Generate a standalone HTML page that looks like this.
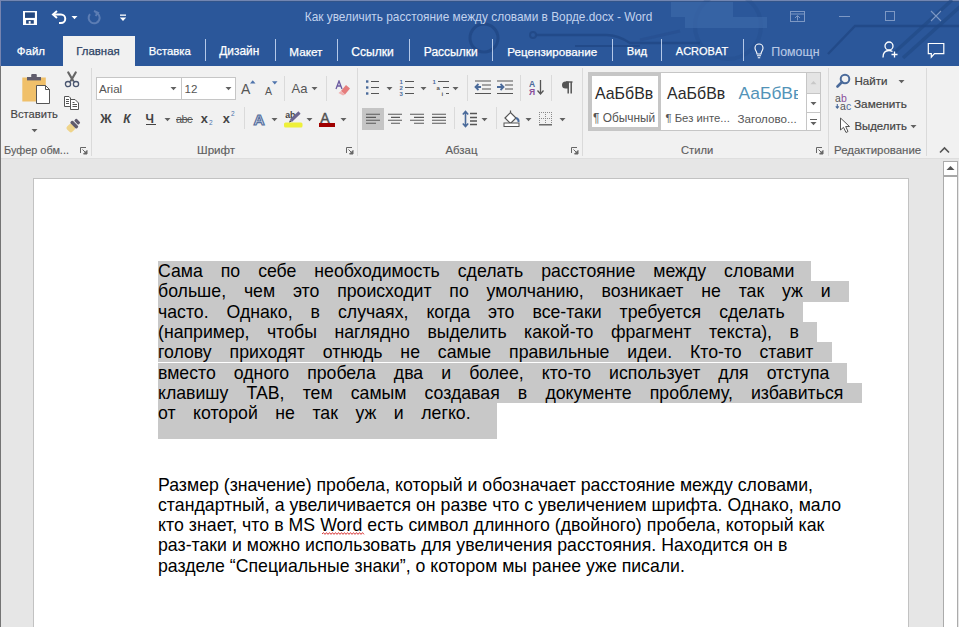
<!DOCTYPE html>
<html><head><meta charset="utf-8">
<style>
*{box-sizing:border-box}
html,body{margin:0;padding:0}
body{width:959px;height:627px;overflow:hidden;position:relative;background:#e6e6e6;font-family:"Liberation Sans",sans-serif}
.a{position:absolute}
#top{left:0;top:0;width:959px;height:66px;background:#2b579a;overflow:hidden}
#ribbon{left:0;top:66px;width:959px;height:93px;background:#f1f1f1;border-bottom:1px solid #dedede}
#page{left:33px;top:178px;width:876px;height:460px;background:#fff;border:1px solid #c2c2c2}
#sb{left:943px;top:161px;width:15px;height:470px;background:#fff;border:1px solid #ababab}
.ln{position:absolute;left:158px;font-size:17.7px;line-height:20.3px;height:20.3px;white-space:pre;color:#000}
.hl{position:absolute;background:#c8c8c8}
.tab{position:absolute;top:45.5px;line-height:1;font-size:12px;color:#fff;white-space:pre;-webkit-text-stroke:0.25px currentColor}
.t1{line-height:1;white-space:pre}
.sep{position:absolute;width:1px;background:#b4c8e8}
.gl{position:absolute;color:#5e5e5e;-webkit-text-stroke:0.15px #5e5e5e}
.lbl{line-height:1;white-space:pre}
.rsep{position:absolute;width:1px;background:#dadada}
</style></head><body>
<div class="a" id="top">
  <div class="a" style="left:0;top:0;width:959px;height:1px;background:#7286b2"></div>
  <div class="a" style="left:0;top:1px;width:959px;height:1px;background:#33558a"></div>
  <svg class="a" style="left:0;top:0" width="959" height="66" viewBox="0 0 959 66">
   <g fill="none" stroke="#204784" stroke-opacity="0.8">
    <circle cx="484" cy="38" r="14" stroke-width="3"/>
    <circle cx="533" cy="35" r="3" stroke-width="2"/>
    <path d="M536 35 H606 Q618 35 630 43 H700" stroke-width="2.5"/>
    <path d="M575 46 H640" stroke-width="2"/>
    <circle cx="728" cy="26" r="33" stroke-width="4" stroke-opacity="0.2"/>
    <path d="M640 40 L680 31" stroke-width="3" stroke-opacity="0.3"/>
    <path d="M828 54 L855 26 H959" stroke-width="2.5"/>
    <path d="M895 52 L952 0" stroke-width="3.5" stroke-opacity="0.6"/>
    <path d="M903 58 L962 5" stroke-width="3.5" stroke-opacity="0.6"/>
   </g>
   <rect x="671" y="2" width="62" height="15" fill="#3d6aab" fill-opacity="0.6"/>
   <rect x="685" y="17" width="82" height="11" fill="#3d6aab" fill-opacity="0.6"/>
  </svg>
  <div class="a t1" style="left:304.8px;top:11.8px;font-size:11.85px;color:#c2d3ee">Как увеличить расстояние между словами в Ворде.docx - Word</div>
  <div class="tab" style="left:63px;top:36px;width:72px;height:30px;background:#f1f1f1"></div>
  <div class="tab" style="left:16.8px;font-size:11.5px">Файл</div>
  <div class="tab" style="left:76.3px;font-size:11.4px;color:#2b3f63">Главная</div>
  <div class="tab" style="left:148.8px;font-size:11.3px">Вставка</div>
  <div class="sep" style="left:205px;top:39px;height:22px"></div>
  <div class="tab" style="left:219.3px;font-size:11.9px">Дизайн</div>
  <div class="sep" style="left:275px;top:39px;height:22px"></div>
  <div class="tab" style="left:289.3px;font-size:11.7px">Макет</div>
  <div class="sep" style="left:337px;top:39px;height:22px"></div>
  <div class="tab" style="left:351.3px;font-size:12.1px">Ссылки</div>
  <div class="sep" style="left:409px;top:39px;height:22px"></div>
  <div class="tab" style="left:423.8px;font-size:12px">Рассылки</div>
  <div class="sep" style="left:492px;top:39px;height:22px"></div>
  <div class="tab" style="left:507.3px;font-size:11.65px">Рецензирование</div>
  <div class="sep" style="left:612px;top:39px;height:22px"></div>
  <div class="tab" style="left:626.8px;font-size:11.2px">Вид</div>
  <div class="sep" style="left:661px;top:39px;height:22px"></div>
  <div class="tab" style="left:675.8px;font-size:11px">ACROBAT</div>
  <div class="sep" style="left:743px;top:39px;height:22px"></div>
  <div class="tab" style="left:771.3px;font-size:12.4px;color:#b9c9e5;-webkit-text-stroke:0.12px #b9c9e5">Помощн</div>
</div>
<div class="a" style="left:0;top:0;width:1px;height:66px;background:#7684b0;z-index:5"></div>
<div class="a" style="left:0;top:66px;width:1px;height:561px;background:#747474;z-index:5"></div>
<div class="a" id="ribbon"></div>
<!-- QAT -->
<svg class="a" style="left:22.9px;top:10.7px" width="14" height="14" viewBox="0 0 14 14">
 <rect x="0" y="0" width="14" height="14" fill="#fff"/>
 <rect x="2" y="1.4" width="9.9" height="5.5" fill="#24487f"/>
 <rect x="3.1" y="9.1" width="7.7" height="3.6" fill="#24487f"/>
 <rect x="5.7" y="10.1" width="1.9" height="2.6" fill="#fff"/>
</svg>
<svg class="a" style="left:51px;top:10px" width="17" height="15" viewBox="0 0 17 15">
 <path d="M2.5 4.5 H10 A4.2 4.2 0 0 1 10 13 H8" fill="none" stroke="#fff" stroke-width="2"/>
 <path d="M6 1 L2 4.5 L6 8" fill="none" stroke="#fff" stroke-width="2"/>
</svg>
<svg class="a" style="left:71px;top:15px" width="7" height="5" viewBox="0 0 7 5"><path d="M0.5 1 H6.5 L3.5 4.2Z" fill="#fff"/></svg>
<svg class="a" style="left:86px;top:10px" width="16" height="15" viewBox="0 0 16 15">
 <path d="M9.5 2.5 A5.5 5.5 0 1 1 4 4.2" fill="none" stroke="#5c7db4" stroke-width="2"/>
 <path d="M8 1 L12 2.8 L9.6 6" fill="none" stroke="#5c7db4" stroke-width="2"/>
</svg>
<svg class="a" style="left:119px;top:14px" width="8" height="8" viewBox="0 0 8 8"><rect x="1" y="0.5" width="6" height="1.3" fill="#fff"/><path d="M0.8 3.5 H7.2 L4 7Z" fill="#fff"/></svg>

<!-- Clipboard group -->
<svg class="a" style="left:22px;top:73px" width="29" height="32" viewBox="0 0 29 32">
 <rect x="0.3" y="4.5" width="23.5" height="24" fill="#f0c06a"/>
 <rect x="5" y="4" width="14" height="3.4" fill="#605c6c"/>
 <rect x="9.2" y="1" width="5.6" height="3.4" rx="1" fill="#605c6c"/>
 <path d="M14.5 12.5 H23.5 L27.5 16.5 V30.5 H14.5 Z" fill="#fff" stroke="#555" stroke-width="1"/>
 <path d="M23.5 12.5 V16.5 H27.5" fill="none" stroke="#555" stroke-width="1"/>
</svg>
<div class="a lbl" style="left:10.5px;top:108.8px;font-size:11.2px;color:#444;-webkit-text-stroke:0.15px #444">Вставить</div>
<svg class="a" style="left:31px;top:128px" width="7" height="5" viewBox="0 0 7 5"><path d="M0.5 1 H6.5 L3.5 4.2Z" fill="#616161"/></svg>
<svg class="a" style="left:64px;top:71px" width="16" height="17" viewBox="0 0 16 17">
 <path d="M4.3 1.5 L8.8 9.3 M11.7 1.5 L7.2 9.3" stroke="#666" stroke-width="2.2" stroke-linecap="round"/>
 <path d="M6.8 9.5 L5.3 11 M9.2 9.5 L10.7 11" stroke="#4a5670" stroke-width="1.2"/>
 <circle cx="4" cy="13.1" r="2.6" fill="none" stroke="#4a5670" stroke-width="1.3"/>
 <circle cx="12" cy="13.1" r="2.6" fill="none" stroke="#4a5670" stroke-width="1.3"/>
</svg>
<svg class="a" style="left:63px;top:95px" width="17" height="16" viewBox="0 0 17 16">
 <path d="M1.5 1.5 H6 L7.5 3 V11.5 H1.5 Z" fill="#fff" stroke="#555" stroke-width="1"/>
 <path d="M3 4.5 H6 M3 6.5 H6 M3 8.5 H6" stroke="#555" stroke-width="1"/>
 <path d="M7.5 4.5 H12 L15.5 8 V14.5 H7.5 Z" fill="#fff" stroke="#555" stroke-width="1"/>
 <path d="M9.5 7.5 H11.5 M9.5 9.5 H14 M9.5 11.5 H14" stroke="#555" stroke-width="1"/>
</svg>
<svg class="a" style="left:60px;top:112px" width="26" height="24" viewBox="0 0 26 24">
 <g transform="translate(6 3.4) rotate(-45 9 8.5)">
  <rect x="-0.5" y="4.8" width="7" height="7.4" rx="2" fill="#efd48a"/>
  <rect x="6.3" y="4" width="3.4" height="9" rx="1.2" fill="#5f5b6c"/>
  <rect x="10.6" y="5.5" width="3.2" height="6" rx="1" fill="#5f5b6c"/>
 </g>
</svg>
<div class="a lbl gl" style="left:4px;top:144.6px;font-size:10.9px">Буфер обм...</div>
<svg class="a launch" style="left:80px;top:147px" width="8" height="8" viewBox="0 0 8 8"><path d="M0.5 6 V0.5 H6" fill="none" stroke="#666" stroke-width="1"/><path d="M2.5 2.5 L6.5 6.5 M7 3.5 V7 H3.5Z" stroke="#666" stroke-width="1" fill="#666"/></svg>
<div class="rsep" style="left:91px;top:68px;height:88px"></div>

<!-- Font group -->
<div class="a" style="left:96px;top:77px;width:86px;height:23px;background:#fff;border:1px solid #c6c6c6"></div>
<div class="a" style="left:181px;top:77px;width:55px;height:23px;background:#fff;border:1px solid #c6c6c6"></div>
<div class="a lbl" style="left:99px;top:83px;font-size:11.6px;color:#555">Arial</div>
<div class="a lbl" style="left:184.5px;top:83px;font-size:11.6px;color:#555">12</div>
<svg class="a" style="left:170px;top:86px" width="7" height="5" viewBox="0 0 7 5"><path d="M0.5 1 H6.5 L3.5 4.2Z" fill="#616161"/></svg>
<svg class="a" style="left:225px;top:86px" width="7" height="5" viewBox="0 0 7 5"><path d="M0.5 1 H6.5 L3.5 4.2Z" fill="#616161"/></svg>

<div class="a" id="page"></div>
<div class="a" id="sb"></div>

<!-- Font group rest -->
<div class="a lbl" style="left:241px;top:82px;font-size:14px;color:#555">A</div>
<svg class="a" style="left:250px;top:80px" width="6" height="4" viewBox="0 0 6 4"><path d="M0 3.5 H5.5 L2.75 0.3Z" fill="#4f74ac"/></svg>
<div class="a lbl" style="left:265px;top:85.5px;font-size:10.5px;color:#555">A</div>
<svg class="a" style="left:272px;top:80.5px" width="6" height="4" viewBox="0 0 6 4"><path d="M0 0.3 H5.5 L2.75 3.5Z" fill="#4f74ac"/></svg>
<div class="rsep" style="left:284px;top:76px;height:25px"></div>
<div class="a lbl" style="left:291.5px;top:82.3px;font-size:13px;color:#555">Aa</div>
<svg class="a" style="left:311px;top:86px" width="7" height="5" viewBox="0 0 7 5"><path d="M0.5 1 H6.5 L3.5 4.2Z" fill="#616161"/></svg>
<div class="rsep" style="left:326px;top:76px;height:25px"></div>
<svg class="a" style="left:335px;top:80px" width="16" height="16" viewBox="0 0 16 16">
 <path d="M1 9 L4 1 L7 9 M2.2 6 H5.8" fill="none" stroke="#6b5aa0" stroke-width="1.3"/>
 <path d="M6 11 L11 5 L15 8.5 L10 14.5 Z" fill="#e57c7c"/>
 <path d="M3.5 13 L6 11 L10 14.5 L8 15.5 Z" fill="#f0b0b0"/>
</svg>
<!-- row 2 -->
<div class="a lbl" style="left:100.3px;top:112.6px;font-size:12.6px;font-weight:bold;color:#444">Ж</div>
<div class="a lbl" style="left:123.3px;top:113.2px;font-size:12px;font-weight:bold;font-style:italic;color:#444">К</div>
<div class="a lbl" style="left:145.5px;top:113.2px;font-size:12px;font-weight:bold;color:#444">Ч</div>
<div class="a" style="left:146px;top:124px;width:10px;height:1.2px;background:#444"></div>
<svg class="a" style="left:164px;top:117px" width="7" height="5" viewBox="0 0 7 5"><path d="M0.5 1 H6.5 L3.5 4.2Z" fill="#616161"/></svg>
<div class="a lbl" style="left:176px;top:113.5px;font-size:11px;color:#555;letter-spacing:-0.6px">abc</div>
<div class="a" style="left:176px;top:119px;width:17px;height:1px;background:#555"></div>
<div class="a lbl" style="left:200.8px;top:113.2px;font-size:12.8px;font-weight:bold;color:#444">x</div>
<div class="a lbl" style="left:209px;top:120px;font-size:6.5px;color:#4f74ac">2</div>
<div class="a lbl" style="left:222.8px;top:113.2px;font-size:12.8px;font-weight:bold;color:#444">x</div>
<div class="a lbl" style="left:231px;top:111px;font-size:6.5px;color:#4f74ac">2</div>
<div class="rsep" style="left:244px;top:107px;height:22px"></div>
<svg class="a" style="left:252px;top:110px" width="17" height="17" viewBox="0 0 17 17">
 <text x="1.6" y="14.6" font-family="Liberation Sans" font-weight="bold" font-size="15.5" fill="#dfe7f3" stroke="#58719f" stroke-width="1.2">A</text>
</svg>
<svg class="a" style="left:271px;top:117px" width="7" height="5" viewBox="0 0 7 5"><path d="M0.5 1 H6.5 L3.5 4.2Z" fill="#616161"/></svg>
<svg class="a" style="left:283px;top:110px" width="20" height="18" viewBox="0 0 20 18">
 <rect x="1" y="12.4" width="18.5" height="5" rx="1.5" fill="#eef03a"/>
 <text x="2.2" y="8" font-family="Liberation Sans" font-weight="bold" font-size="8.8" fill="#444">ab</text>
 <path d="M8 10.5 L16.5 2.5" stroke="#6b6690" stroke-width="3.2"/>
 <path d="M6 12.6 L7 10 L8.8 11.6 Z" fill="#444"/>
</svg>
<svg class="a" style="left:306px;top:117px" width="7" height="5" viewBox="0 0 7 5"><path d="M0.5 1 H6.5 L3.5 4.2Z" fill="#616161"/></svg>
<div class="a lbl" style="left:320.3px;top:111.3px;font-size:14px;color:#505050;-webkit-text-stroke:0.4px #505050">A</div>
<div class="a" style="left:319px;top:123px;width:16px;height:3.5px;background:#a00000"></div>
<svg class="a" style="left:340px;top:117px" width="7" height="5" viewBox="0 0 7 5"><path d="M0.5 1 H6.5 L3.5 4.2Z" fill="#616161"/></svg>
<div class="a lbl gl" style="left:197px;top:144.3px;font-size:11.6px">Шрифт</div>
<svg class="a launch" style="left:346px;top:147px" width="8" height="8" viewBox="0 0 8 8"><path d="M0.5 6 V0.5 H6" fill="none" stroke="#666" stroke-width="1"/><path d="M2.5 2.5 L6.5 6.5 M7 3.5 V7 H3.5Z" stroke="#666" stroke-width="1" fill="#666"/></svg>
<div class="rsep" style="left:357px;top:68px;height:88px"></div>

<!-- Paragraph group -->
<svg class="a" style="left:365px;top:79px" width="16" height="17" viewBox="0 0 16 17">
 <rect x="1" y="1.3" width="2.4" height="2.4" fill="#4a6a9a"/><rect x="1" y="7.3" width="2.4" height="2.4" fill="#4a6a9a"/><rect x="1" y="13.3" width="2.4" height="2.4" fill="#4a6a9a"/>
 <path d="M6 2.5 H14 M6 8.5 H14 M6 14.5 H14" stroke="#555" stroke-width="1.2"/>
</svg>
<svg class="a" style="left:386px;top:86px" width="7" height="5" viewBox="0 0 7 5"><path d="M0.5 1 H6.5 L3.5 4.2Z" fill="#616161"/></svg>
<svg class="a" style="left:399px;top:78px" width="16" height="18" viewBox="0 0 16 18">
 <text x="0.5" y="6" font-family="Liberation Sans" font-weight="bold" font-size="6" fill="#4a6a9a">1</text>
 <text x="0.5" y="12" font-family="Liberation Sans" font-weight="bold" font-size="6" fill="#4a6a9a">2</text>
 <text x="0.5" y="18" font-family="Liberation Sans" font-weight="bold" font-size="6" fill="#4a6a9a">3</text>
 <path d="M6 3.5 H15 M6 9.5 H15 M6 15.5 H15" stroke="#555" stroke-width="1.2"/>
</svg>
<svg class="a" style="left:420px;top:86px" width="7" height="5" viewBox="0 0 7 5"><path d="M0.5 1 H6.5 L3.5 4.2Z" fill="#616161"/></svg>
<svg class="a" style="left:432px;top:78px" width="18" height="18" viewBox="0 0 18 18">
 <text x="0.5" y="6" font-family="Liberation Sans" font-weight="bold" font-size="6" fill="#4a6a9a">1</text>
 <text x="4.5" y="12" font-family="Liberation Sans" font-weight="bold" font-size="6" fill="#555">a</text>
 <text x="9.5" y="18" font-family="Liberation Sans" font-weight="bold" font-size="6" fill="#555">i</text>
 <path d="M6 3.5 H17 M11 9.5 H17 M14 15.5 H17" stroke="#555" stroke-width="1.2"/>
</svg>
<svg class="a" style="left:452px;top:86px" width="7" height="5" viewBox="0 0 7 5"><path d="M0.5 1 H6.5 L3.5 4.2Z" fill="#616161"/></svg>
<div class="rsep" style="left:467px;top:75px;height:26px"></div>
<svg class="a" style="left:474px;top:80px" width="18" height="15" viewBox="0 0 18 15">
 <path d="M1 1 H17 M8 5 H17 M8 9 H17 M1 13.5 H17" stroke="#555" stroke-width="1.2"/>
 <path d="M1.5 7 H7 M4.5 4 L1.5 7 L4.5 10" fill="none" stroke="#4a6a9a" stroke-width="1.8"/>
</svg>
<svg class="a" style="left:496px;top:80px" width="18" height="15" viewBox="0 0 18 15">
 <path d="M1 1 H17 M9 5 H17 M9 9 H17 M1 13.5 H17" stroke="#555" stroke-width="1.2"/>
 <path d="M1 7 H7.5 M4.5 4 L7.5 7 L4.5 10" fill="none" stroke="#4a6a9a" stroke-width="1.8"/>
</svg>
<div class="rsep" style="left:520px;top:75px;height:26px"></div>
<svg class="a" style="left:529px;top:79px" width="16" height="17" viewBox="0 0 16 17">
 <text x="0" y="8" font-family="Liberation Sans" font-weight="bold" font-size="8.5" fill="#4a6a9a">А</text>
 <text x="0" y="16" font-family="Liberation Sans" font-weight="bold" font-size="8.5" fill="#8a4f9a">Я</text>
 <path d="M11.5 1 V15 M8.5 11.5 L11.5 15 L14.5 11.5" fill="none" stroke="#555" stroke-width="1.3"/>
</svg>
<div class="rsep" style="left:551px;top:75px;height:26px"></div>
<svg class="a" style="left:561px;top:81px" width="12" height="14" viewBox="0 0 12 14">
 <path d="M5 1 H11.5" stroke="#555" stroke-width="1.4"/>
 <path d="M7.2 1 V12.6 M10.2 1 V12.6" stroke="#555" stroke-width="1.5"/>
 <path d="M7.5 0.5 H4.5 A3.5 3.5 0 0 0 4.5 7.5 H7.5 Z" fill="#555"/>
</svg>
<!-- row 2 -->
<div class="a" style="left:362px;top:108px;width:22px;height:22px;background:#c5c5c5"></div>
<svg class="a" style="left:362px;top:108px" width="90" height="22" viewBox="0 0 90 22">
 <path d="M4 6.2 H18 M4 9.4 H14 M4 12.3 H18 M4 15.3 H14" stroke="#5a5a5a" stroke-width="1.1"/>
 <path d="M26 6.2 H40 M29 9.4 H38 M26 12.3 H40 M29 15.3 H38" stroke="#5a5a5a" stroke-width="1.1"/>
 <path d="M48 6.2 H62 M52 9.4 H62 M48 12.3 H62 M52 15.3 H62" stroke="#5a5a5a" stroke-width="1.1"/>
 <path d="M70 6.2 H84 M70 9.4 H84 M70 12.3 H84 M70 15.3 H84" stroke="#5a5a5a" stroke-width="1.1"/>
</svg>
<div class="rsep" style="left:454px;top:107px;height:22px"></div>
<svg class="a" style="left:462px;top:110px" width="16" height="18" viewBox="0 0 16 18">
 <path d="M3.5 1.5 V16.5 M0.8 4.5 L3.5 1.5 L6.2 4.5 M0.8 13.5 L3.5 16.5 L6.2 13.5" fill="none" stroke="#4a6a9a" stroke-width="1.6"/>
 <path d="M8 3.5 H15 M8 7.5 H15 M8 11 H15 M8 14.5 H15" stroke="#555" stroke-width="1.3"/>
</svg>
<svg class="a" style="left:481px;top:117px" width="7" height="5" viewBox="0 0 7 5"><path d="M0.5 1 H6.5 L3.5 4.2Z" fill="#616161"/></svg>
<div class="rsep" style="left:496px;top:107px;height:22px"></div>
<svg class="a" style="left:503px;top:110px" width="18" height="17" viewBox="0 0 18 17">
 <path d="M2 8 L7.5 2.5 L13 8 L7.5 13.5 Z" fill="#fff" stroke="#555" stroke-width="1.2"/>
 <path d="M7.5 2.5 V0.5" stroke="#555" stroke-width="1.2"/>
 <path d="M13 8 Q16 9 15.5 12" fill="none" stroke="#4a6a9a" stroke-width="2"/>
 <rect x="1" y="13" width="15" height="3.5" fill="#fff" stroke="#555" stroke-width="1"/>
</svg>
<svg class="a" style="left:525px;top:117px" width="7" height="5" viewBox="0 0 7 5"><path d="M0.5 1 H6.5 L3.5 4.2Z" fill="#616161"/></svg>
<svg class="a" style="left:538px;top:111px" width="15" height="15" viewBox="0 0 15 15">
 <path d="M1.5 1 V13 M7.5 1 V13 M13.5 1 V13 M1 1.5 H14 M1 7.5 H14" fill="none" stroke="#8a8a8a" stroke-width="1" stroke-dasharray="1 1"/>
 <path d="M1 13.8 H14" stroke="#555" stroke-width="1.3"/>
</svg>
<svg class="a" style="left:559px;top:117px" width="7" height="5" viewBox="0 0 7 5"><path d="M0.5 1 H6.5 L3.5 4.2Z" fill="#616161"/></svg>
<div class="a lbl gl" style="left:445.5px;top:144.5px;font-size:11.4px">Абзац</div>
<svg class="a launch" style="left:571px;top:147px" width="8" height="8" viewBox="0 0 8 8"><path d="M0.5 6 V0.5 H6" fill="none" stroke="#666" stroke-width="1"/><path d="M2.5 2.5 L6.5 6.5 M7 3.5 V7 H3.5Z" stroke="#666" stroke-width="1" fill="#666"/></svg>
<div class="rsep" style="left:582px;top:68px;height:88px"></div>

<!-- Styles group -->
<div class="a" style="left:588px;top:72px;width:233px;height:59px;background:#fff;border:1px solid #c6c6c6"></div>
<div class="a" style="left:589px;top:73px;width:72px;height:57px;border:3px solid #c6c6c6"></div>
<div class="a lbl" style="left:595px;top:85.5px;font-size:15.9px;color:#2a2a2a">АаБбВв</div>
<div class="a lbl" style="left:593px;top:112.5px;font-size:11.9px;color:#555">¶ Обычный</div>
<div class="a lbl" style="left:667px;top:85.5px;font-size:15.9px;color:#2a2a2a">АаБбВв</div>
<div class="a lbl" style="left:665.5px;top:112.5px;font-size:11.3px;color:#555">¶ Без инте...</div>
<div class="a" style="left:738px;top:83px;width:60px;height:22px;overflow:hidden"><div class="a lbl" style="left:0.5px;top:2.3px;font-size:17.4px;color:#5293b8">АаБбВв</div></div>
<div class="a lbl" style="left:737.5px;top:112.5px;font-size:11.6px;color:#555">Заголово...</div>
<div class="a" style="left:806px;top:72px;width:15px;height:59px;border:1px solid #c6c6c6;background:#fff"></div>
<div class="a" style="left:807px;top:73px;width:13px;height:20px;background:#e4e4e4"></div>
<div class="a" style="left:806px;top:93px;width:15px;height:1px;background:#c6c6c6"></div>
<div class="a" style="left:806px;top:112px;width:15px;height:1px;background:#c6c6c6"></div>
<svg class="a" style="left:810px;top:80px" width="7" height="5" viewBox="0 0 7 5"><path d="M0.5 4.2 H6.5 L3.5 1Z" fill="#c8c8c8"/></svg>
<svg class="a" style="left:810px;top:101px" width="7" height="5" viewBox="0 0 7 5"><path d="M0.5 1 H6.5 L3.5 4.2Z" fill="#616161"/></svg>
<div class="a" style="left:810px;top:119px;width:7px;height:1px;background:#616161"></div>
<svg class="a" style="left:810px;top:121px" width="7" height="5" viewBox="0 0 7 5"><path d="M0.5 1 H6.5 L3.5 4.2Z" fill="#616161"/></svg>
<div class="a lbl gl" style="left:681px;top:144.5px;font-size:11.2px">Стили</div>
<svg class="a launch" style="left:816px;top:147px" width="8" height="8" viewBox="0 0 8 8"><path d="M0.5 6 V0.5 H6" fill="none" stroke="#666" stroke-width="1"/><path d="M2.5 2.5 L6.5 6.5 M7 3.5 V7 H3.5Z" stroke="#666" stroke-width="1" fill="#666"/></svg>
<div class="rsep" style="left:828px;top:68px;height:88px"></div>
<!-- Editing group -->
<svg class="a" style="left:836px;top:73px" width="15" height="15" viewBox="0 0 15 15">
 <circle cx="9" cy="6" r="4.3" fill="none" stroke="#4a6a9a" stroke-width="2"/>
 <path d="M6 9 L1.5 13.5" stroke="#4a6a9a" stroke-width="2.6" stroke-linecap="round"/>
</svg>
<div class="a lbl" style="left:854.5px;top:74.8px;font-size:11.6px;color:#444;-webkit-text-stroke:0.2px #444">Найти</div>
<svg class="a" style="left:898px;top:79px" width="7" height="5" viewBox="0 0 7 5"><path d="M0.5 1 H6.5 L3.5 4.2Z" fill="#616161"/></svg>
<svg class="a" style="left:835px;top:94px" width="19" height="17" viewBox="0 0 19 17">
 <text x="0" y="8" font-family="Liberation Sans" font-size="10.5" fill="#555">a</text>
 <text x="6" y="8" font-family="Liberation Sans" font-size="10.5" fill="#8a4f9a">b</text>
 <text x="5" y="16.3" font-family="Liberation Sans" font-size="10.5" fill="#555">a</text>
 <text x="11" y="16.3" font-family="Liberation Sans" font-size="10.5" fill="#4a6a9a">c</text>
 <path d="M2.3 10 V14 M0.8 12.3 L2.3 14.2 L3.8 12.3" fill="none" stroke="#4a6a9a" stroke-width="1.1"/>
</svg>
<div class="a lbl" style="left:854px;top:97.9px;font-size:11.75px;color:#444;-webkit-text-stroke:0.2px #444">Заменить</div>
<svg class="a" style="left:839px;top:117px" width="12" height="17" viewBox="0 0 12 17">
 <path d="M1.5 1 V13 L4.5 10.3 L7 15.5 L9 14.5 L6.7 9.5 H10.5 Z" fill="#fff" stroke="#555" stroke-width="1"/>
</svg>
<div class="a lbl" style="left:854.5px;top:120.5px;font-size:11.35px;color:#444;-webkit-text-stroke:0.2px #444">Выделить</div>
<svg class="a" style="left:910px;top:124px" width="7" height="5" viewBox="0 0 7 5"><path d="M0.5 1 H6.5 L3.5 4.2Z" fill="#616161"/></svg>
<div class="a lbl gl" style="left:834px;top:144.5px;font-size:11.45px">Редактирование</div>
<div class="rsep" style="left:926px;top:68px;height:88px"></div>
<svg class="a" style="left:939px;top:146px" width="11" height="8" viewBox="0 0 11 8"><path d="M1 6.5 L5.5 2 L10 6.5" fill="none" stroke="#555" stroke-width="1.6"/></svg>

<!-- Title bar right controls -->
<svg class="a" style="left:790px;top:11px" width="15" height="11" viewBox="0 0 15 11">
 <rect x="0.5" y="0.5" width="14" height="10" fill="none" stroke="#7d98c4" stroke-width="1"/>
 <path d="M0.5 3 H14.5 M7.5 9.5 V5 M5 7 L7.5 4.5 L10 7" fill="none" stroke="#7d98c4" stroke-width="1"/>
</svg>
<div class="a" style="left:839px;top:16px;width:11px;height:1px;background:#7d98c4"></div>
<div class="a" style="left:885px;top:11px;width:10px;height:10px;border:1px solid #7d98c4"></div>
<svg class="a" style="left:930px;top:10px" width="12" height="12" viewBox="0 0 12 12"><path d="M1 1 L11 11 M11 1 L1 11" stroke="#7d98c4" stroke-width="1.1"/></svg>
<!-- tab row right icons -->
<svg class="a" style="left:754px;top:43px" width="10" height="16" viewBox="0 0 10 16">
 <path d="M3 11 C3 8.5 1 7.5 1 5 A4 4 0 0 1 9 5 C9 7.5 7 8.5 7 11 Z" fill="none" stroke="#fff" stroke-width="1.1"/>
 <path d="M3 12.8 H7 M3.8 14.8 H6.2" stroke="#fff" stroke-width="1.1"/>
</svg>
<svg class="a" style="left:882px;top:41px" width="17" height="18" viewBox="0 0 17 18">
 <circle cx="7" cy="5" r="4" fill="none" stroke="#fff" stroke-width="1.3"/>
 <path d="M1 16.5 C1 12 3.5 9.5 7 9.5 C8.5 9.5 9.5 10 10.5 10.5" fill="none" stroke="#fff" stroke-width="1.3"/>
 <path d="M12.5 10.5 V16.5 M9.5 13.5 H15.5" stroke="#fff" stroke-width="1.3"/>
</svg>
<svg class="a" style="left:927px;top:42px" width="18" height="17" viewBox="0 0 18 17">
 <path d="M1.3 1.5 H16.8 V11.7 H7.5 L4.3 15.2 V11.7 H1.3 Z" fill="none" stroke="#fff" stroke-width="1.2"/>
</svg>

<!-- Scrollbar -->
<div class="a" style="left:944px;top:162px;width:13px;height:15px;background:#fff;border-bottom:2px solid #a8a8a8"></div>
<svg class="a" style="left:946px;top:165.2px" width="9" height="6" viewBox="0 0 9 6"><path d="M0.5 5 H8.5 L4.5 1Z" fill="#555"/></svg>

<!-- highlight -->
<div class="hl" style="left:158px;top:261px;width:653px;height:20.3px"></div>
<div class="hl" style="left:158px;top:281.3px;width:691px;height:20.3px"></div>
<div class="hl" style="left:158px;top:301.6px;width:645px;height:20.3px"></div>
<div class="hl" style="left:158px;top:321.9px;width:659px;height:20.3px"></div>
<div class="hl" style="left:158px;top:342.2px;width:674px;height:20.3px"></div>
<div class="hl" style="left:158px;top:362.5px;width:689px;height:20.3px"></div>
<div class="hl" style="left:158px;top:382.8px;width:704px;height:20.3px"></div>
<div class="hl" style="left:158px;top:402.5px;width:339px;height:36.3px"></div>

<div class="ln" style="top:261px;word-spacing:13.04px">Сама по себе необходимость сделать расстояние между словами</div>
<div class="ln" style="top:281.3px;word-spacing:12.92px">больше, чем это происходит по умолчанию, возникает не так уж и</div>
<div class="ln" style="top:301.6px;word-spacing:13.11px">часто. Однако, в случаях, когда это все-таки требуется сделать</div>
<div class="ln" style="top:321.9px;word-spacing:12.61px">(например, чтобы наглядно выделить какой-то фрагмент текста), в</div>
<div class="ln" style="top:342.2px;word-spacing:12.93px">голову приходят отнюдь не самые правильные идеи. Кто-то ставит</div>
<div class="ln" style="top:362.5px;word-spacing:13.15px">вместо одного пробела два и более, кто-то использует для отступа</div>
<div class="ln" style="top:382.8px;word-spacing:13.22px">клавишу TAB, тем самым создавая в документе проблему, избавиться</div>
<div class="ln" style="top:403.1px;word-spacing:12.62px">от которой не так уж и легко.</div>

<div class="ln" style="top:474.5px;letter-spacing:0.011px">Размер (значение) пробела, который и обозначает расстояние между словами,</div>
<div class="ln" style="top:494.8px;letter-spacing:0.031px">стандартный, а увеличивается он разве что с увеличением шрифта. Однако, мало</div>
<div class="ln" style="top:515.1px;letter-spacing:0.052px">кто знает, что в MS Word есть символ длинного (двойного) пробела, который как</div>
<div class="ln" style="top:535.4px;letter-spacing:0.018px">раз-таки и можно использовать для увеличения расстояния. Находится он в</div>
<div class="ln" style="top:555.7px">разделе “Специальные знаки”, о котором мы ранее уже писали.</div>

<svg class="a" style="left:322px;top:531.6px" width="44" height="3.5" viewBox="0 0 44 3.5"><path d="M0 2 L1.5 0.6 L3.0 2.4 L4.5 0.6 L6.0 2.4 L7.5 0.6 L9.0 2.4 L10.5 0.6 L12.0 2.4 L13.5 0.6 L15.0 2.4 L16.5 0.6 L18.0 2.4 L19.5 0.6 L21.0 2.4 L22.5 0.6 L24.0 2.4 L25.5 0.6 L27.0 2.4 L28.5 0.6 L30.0 2.4 L31.5 0.6 L33.0 2.4 L34.5 0.6 L36.0 2.4 L37.5 0.6 L39.0 2.4 L40.5 0.6 L42.0 2.4" fill="none" stroke="#d83a3a" stroke-width="1"/></svg>
</body></html>
